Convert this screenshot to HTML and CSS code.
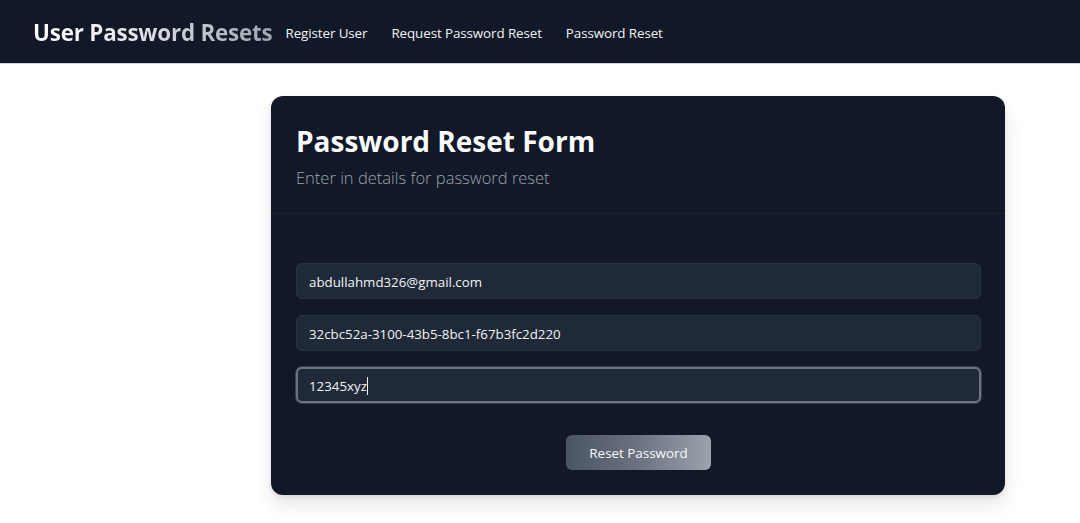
FILE: index.html
```html
<!DOCTYPE html>
<html lang="en">
<head>
<meta charset="utf-8">
<title>User Password Resets</title>
<link rel="stylesheet" href="styles.css">
</head>
<body>
<header class="topbar">
  <span class="brand">User Password Resets</span>
  <nav class="nav">
    <a class="nav-link" href="#">Register User</a>
    <a class="nav-link" href="#">Request Password Reset</a>
    <a class="nav-link" href="#">Password Reset</a>
  </nav>
</header>
<main class="main">
  <section class="card">
    <div class="card-head">
      <h1 class="card-title">Password Reset Form</h1>
      <p class="card-sub">Enter in details for password reset</p>
    </div>
    <form class="card-body">
      <div class="field">abdullahmd326@gmail.com</div>
      <div class="field">32cbc52a-3100-43b5-8bc1-f67b3fc2d220</div>
      <div class="field field-focus">12345xyz<span class="caret"></span></div>
      <div class="actions">
        <button type="button" class="btn">Reset Password</button>
      </div>
    </form>
  </section>
</main>
</body>
</html>
```

FILE: styles.css
```css
* { box-sizing: border-box; }
html, body { margin: 0; padding: 0; }
body {
  background: #ffffff;
  font-family: "Open Sans", "Noto Sans", sans-serif;
  width: 1080px;
  height: 523px;
  overflow: hidden;
}
.topbar {
  height: 64px;
  background: #111827;
  display: flex;
  align-items: center;
  padding-left: 33px;
  border-bottom: 1px solid #d1d5db;
}
.brand {
  font-size: 22.4px;
  font-weight: 700;
  letter-spacing: -0.2px;
  background: linear-gradient(90deg, #ffffff 0%, #e5e7eb 40%, #9ca3af 100%);
  -webkit-background-clip: text;
  background-clip: text;
  color: transparent;
  margin-right: 13px;
  padding-top: 1px;
}
.nav { display: flex; gap: 24px; padding-top: 2px; }
.nav-link {
  color: #f3f4f6;
  text-decoration: none;
  font-size: 13.4px;
  font-weight: 500;
  letter-spacing: -0.1px;
}
.main {
  display: flex;
  padding: 32px 0 0 271px;
}
.card {
  width: 734px;
  height: 399px;
  background: #111827;
  border-radius: 12px;
  box-shadow: 0 10px 18px rgba(0,0,0,0.10), 0 2px 4px rgba(0,0,0,0.08);
}
.card-head {
  padding: 25px 25px 0 25px;
  height: 118px;
  border-bottom: 1px solid #1a2230;
}
.card-title {
  margin: 0;
  font-size: 28px;
  line-height: 40px;
  font-weight: 700;
  color: #f9fafb;
}
.card-sub {
  margin: 5px 0 0 0;
  font-size: 16.5px;
  line-height: 24px;
  font-weight: 300;
  color: #9ca3af;
}
.card-body {
  padding: 49px 24px 0 25px;
  display: flex;
  flex-direction: column;
  gap: 16px;
}
.field {
  height: 36px;
  border-radius: 6px;
  background: #1f2937;
  border: 1px solid #283344;
  color: #f3f4f6;
  font-size: 13.3px;
  display: flex;
  align-items: center;
  padding-left: 12px;
  padding-top: 1px;
}
.field-focus {
  border: 2px solid #6b7280;
  box-shadow: 0 0 0 1px #374151;
  padding-left: 11px;
}
.caret {
  display: inline-block;
  width: 1px;
  height: 18px;
  background: #f3f4f6;
}
.actions {
  display: flex;
  justify-content: center;
  padding-top: 16px;
}
.btn {
  width: 145px;
  height: 35px;
  border: none;
  border-radius: 6px;
  background: linear-gradient(90deg, #4b5563 0%, #6b7280 50%, #9ca3af 100%);
  color: #f9fafb;
  font-family: inherit;
  font-size: 13.4px;
  font-weight: 500;
  padding-top: 2px;
}
```
